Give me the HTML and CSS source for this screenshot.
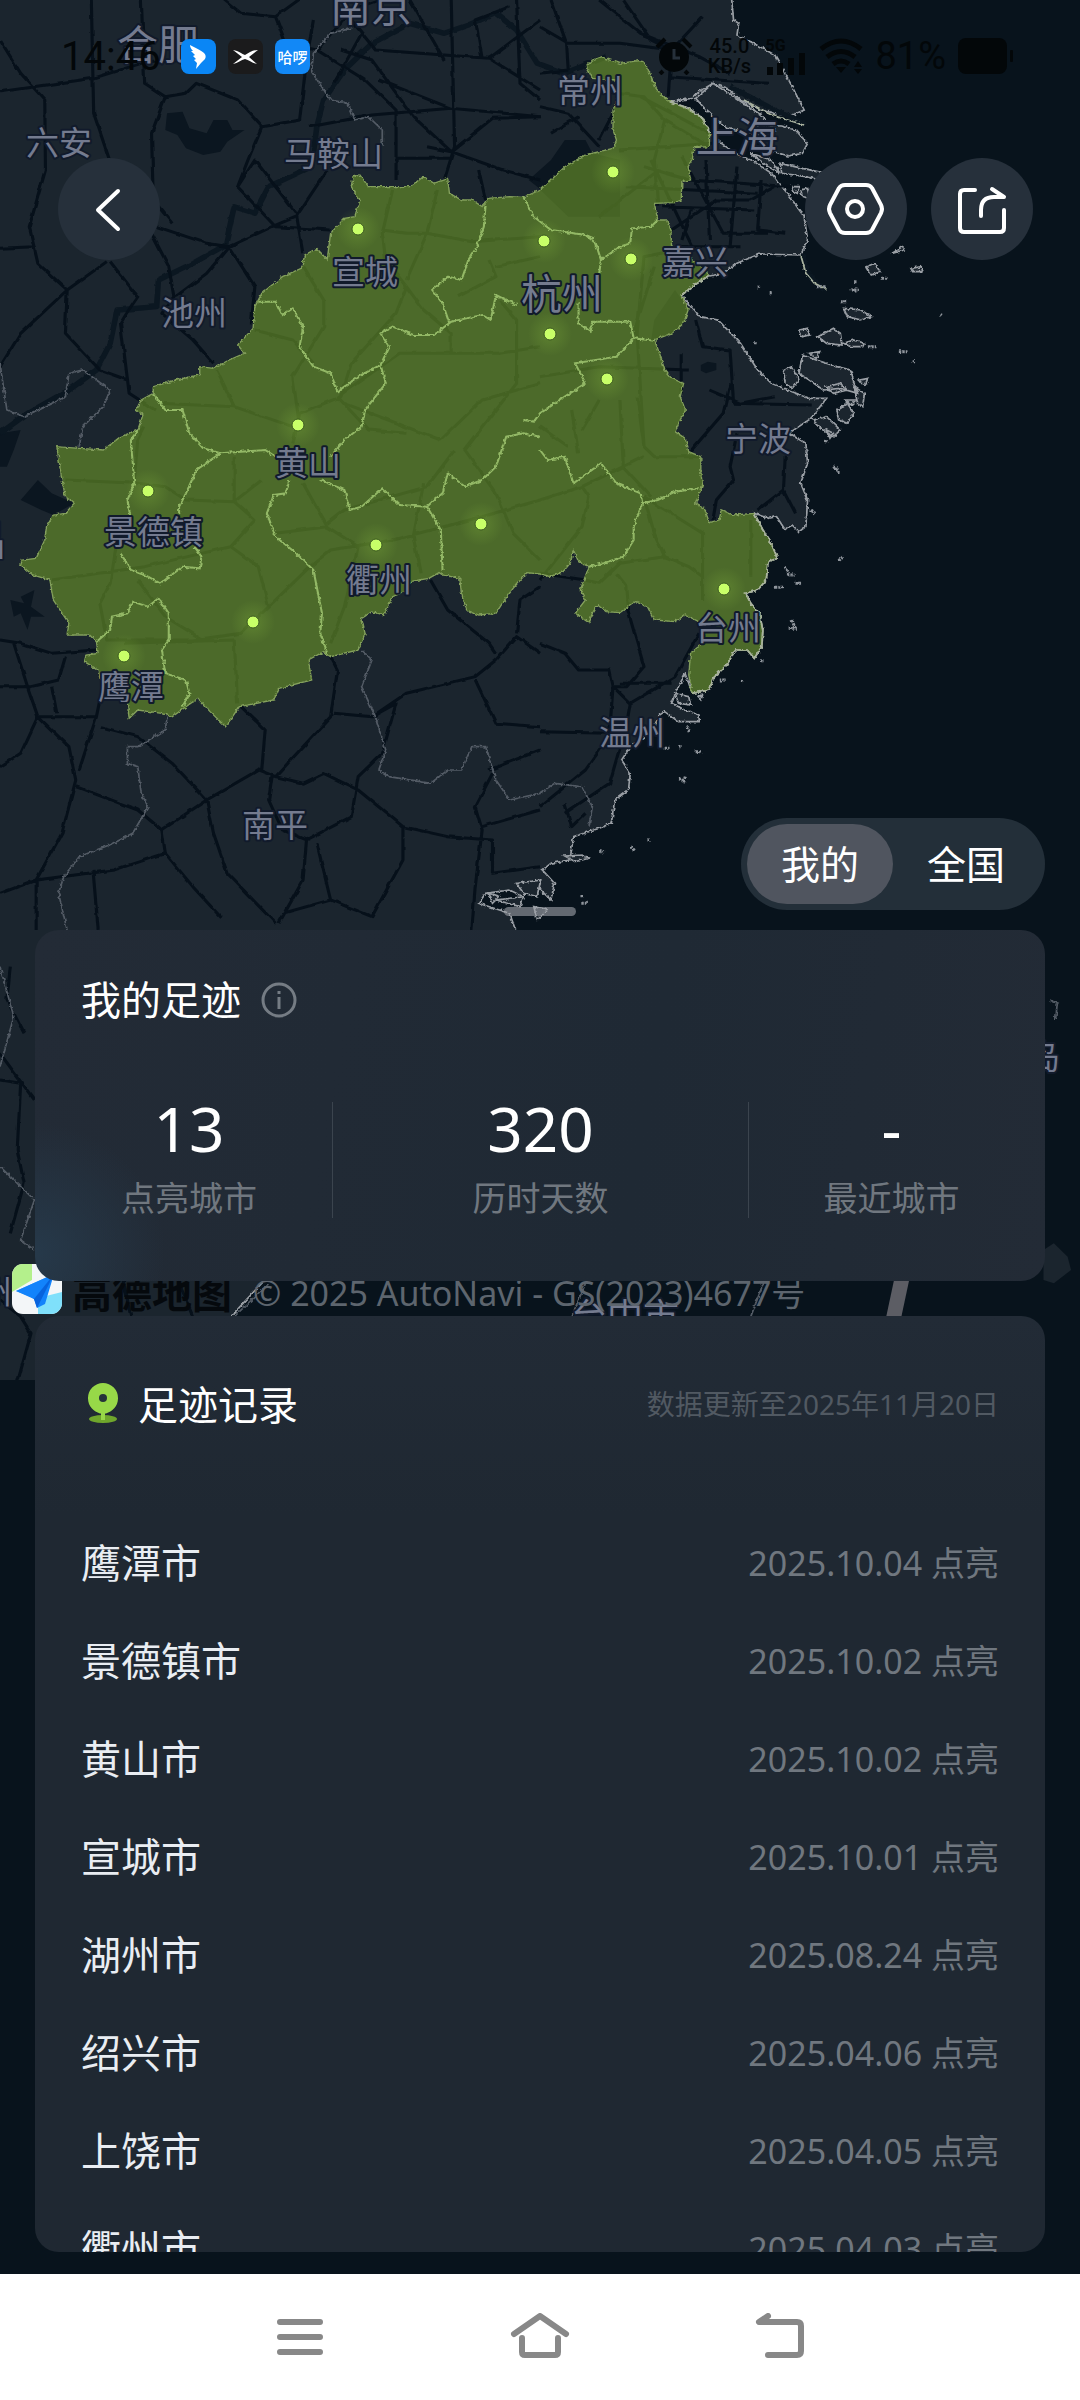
FILE: index.html
```html
<!DOCTYPE html>
<html lang="zh-CN">
<head>
<meta charset="utf-8">
<meta name="viewport" content="width=device-width, initial-scale=1">
<title>我的足迹</title>
<link rel="stylesheet" href="styles.css">
</head>
<body>
<div class="app">
  <svg class="map" viewBox="0 0 1080 1380" preserveAspectRatio="xMidYMin slice" role="img" aria-label="足迹地图">
    <defs>
      <filter id="rough" x="-5%" y="-5%" width="110%" height="110%" color-interpolation-filters="sRGB">
        <feTurbulence type="fractalNoise" baseFrequency="0.09" numOctaves="3" seed="4" result="n"/>
        <feDisplacementMap in="SourceGraphic" in2="n" scale="11" xChannelSelector="R" yChannelSelector="G"/>
      </filter>
      <filter id="bend" x="-5%" y="-5%" width="110%" height="110%" color-interpolation-filters="sRGB">
        <feTurbulence type="fractalNoise" baseFrequency="0.03" numOctaves="2" seed="9" result="n"/>
        <feDisplacementMap in="SourceGraphic" in2="n" scale="10" xChannelSelector="R" yChannelSelector="G"/>
      </filter>
      <radialGradient id="glow"><stop offset="0" stop-color="#a5e04a" stop-opacity=".2"/><stop offset="1" stop-color="#a5e04a" stop-opacity="0"/></radialGradient>
    </defs>
    <rect class="land" width="1080" height="1380"/>
    <g transform="scale(.34439 .33333)">
      <g filter="url(#rough)">
        <path class="sea coast" d="M2123-20 2130 60 2145 70 2140 105 2180 125 2250 165 2290 240 2335 330 2290 350 2210 330 2150 300 2110 265 2070 250 2030 275 2010 295 1945 305 2000 325 2040 355 2060 400 2095 430 2135 460 2190 485 2240 520 2290 585 2335 650 2345 720 2325 765 2205 762 2140 790 2100 820 2050 830 1978 885 2030 950 2085 960 2150 1030 2200 1110 2240 1150 2300 1175 2350 1195 2400 1195 2355 1255 2290 1300 2340 1330 2345 1390 2325 1450 2345 1500 2340 1580 2320 1595 2300 1575 2280 1590 2255 1550 2230 1555 2190 1540 2215 1590 2235 1620 2258 1675 2230 1685 2225 1740 2200 1770 2165 1780 2180 1810 2205 1840 2215 1890 2212 1940 2190 1975 2170 1950 2135 1950 2110 1995 2070 2035 2060 2070 2010 2080 1990 2020 1970 2060 1950 2110 1990 2130 2030 2145 2030 2165 1970 2165 1930 2135 1915 2145 1890 2200 1830 2240 1805 2280 1830 2320 1825 2370 1785 2400 1775 2470 1740 2485 1665 2510 1655 2580 1600 2590 1575 2610 1610 2650 1600 2700 1550 2650 1520 2690 1480 2670 1410 2680 1390 2710 1480 2740 1500 2800 1400 2900 760 3850 670 3950 600 4200 3300 4200 3300-20Z"/>
        <path class="isle" d="M2020 295 2070 250 2130 290 2210 345 2250 390 2190 400 2110 385 2050 330ZM2200 375 2270 378 2310 390 2345 430 2330 460 2290 468 2230 450 2200 420ZM2180 460 2240 480 2265 520 2230 500ZM2265 490 2330 505 2400 520 2400 545 2340 530 2270 520ZM2300 560 2320 560 2315 580 2305 575ZM2325 570 2345 565 2350 595 2330 590Z"/>
        <path class="river" d="M2120 260 2230 320 2340 375M2330 765 2345 820 2370 850 2400 870"/>
        <path class="shore" d="M2325 765 2340 820 2365 850 2400 868M2160 300 2240 345 2335 375"/>
        <path class="isle" d="M2330 1065 2370 1080 2430 1100 2470 1110 2480 1150 2490 1180 2440 1165 2390 1170 2350 1140 2320 1120ZM2375 1010 2420 985 2440 1000 2445 1035 2400 1030ZM2450 925 2500 930 2530 950 2500 960 2460 950ZM2275 1110 2300 1100 2320 1140 2300 1165 2280 1150ZM2360 1260 2400 1250 2440 1290 2420 1310 2390 1290ZM2430 1230 2460 1210 2480 1240 2460 1270 2435 1260ZM2400 1160 2440 1150 2460 1170 2420 1180ZM2320 990 2345 985 2350 1005 2330 1010ZM2450 1030 2480 1020 2510 1030 2505 1040 2470 1040ZM2480 1160 2510 1180 2505 1220 2490 1210ZM2515 800 2540 790 2555 815 2530 825ZM2645 805 2675 800 2680 815 2650 815ZM2590 760 2620 740 2625 750ZM2495 1140 2520 1135 2510 1160ZM2455 1200 2485 1200 2470 1215ZM2400 1290 2420 1300 2410 1315ZM2350 1060 2380 1055 2370 1075ZM1960 2080 2000 2090 2005 2115 1970 2110ZM2025 2090 2040 2085 2035 2100Z"/>
        <path class="isle" d="M1640 2568 1690 2565 1710 2575 1670 2585ZM1420 2680 1450 2690 1430 2710ZM1550 2720 1590 2730 1560 2760ZM1440 2700 1520 2690 1510 2720ZM1500 2650 1570 2640 1560 2690 1520 2680Z"/>
        <path class="islet" d="M2370 860h30M2440 905h20M2480 845h8M2560 835h20M2470 870h24M2200 862h10M2235 878h6M2520 1040h25M2610 1055h25M2650 1085h8M2190 1028h10M2420 1400l20 20M2425 1410l10-8M2280 1700l10 20M2285 1725h22M2250 1762h24M2312 1750h10M2300 1860l8 24M2290 1885h24M2210 1982h8M2150 2040l10 6M2435 1682l14-12M2090 2040h18M1970 2335l20 10M1990 2330l-6 20M1930 2245h14M2020 2255h18M1995 2180l8 16M1970 2240h6M1830 2540l14 12M1880 2520h8M1740 2555h14M1690 2685v8M1688 2710h16M2340 1350l8 6M2355 1530l12 10M2395 1325h10M2730 945h6M2310 1750h16"/>
      </g>
      <path class="lake" d="M485 340 530 335 550 385 600 400 620 360 660 360 675 390 710 390 660 425 640 455 590 465 540 445 515 405 480 390ZM2035 1095 2055 1085 2080 1090 2080 1110 2050 1120 2035 1112ZM0 1300 60 1290 40 1350 20 1400 0 1400ZM60 1500 110 1440 150 1480 215 1510 155 1545 120 1530 60 1500ZM30 1800 70 1810 60 1790 100 1770 90 1820 130 1850 90 1850 80 1890 60 1840 40 1850ZM1535 540 1600 480 1640 420 1700 420 1720 460 1800 480 1800 650 1650 650 1560 560ZM1960 870 2000 930 1985 970 1950 1000 1890 1025 1900 960Z"/>
      <g filter="url(#bend)">
        <path class="river" d="M1440 40 1360 75 1290 100 1190 70 1080 130 1000 210 940 300 920 380 905 500 780 560 740 640 680 620 655 735 560 790 460 840 455 920 340 930 320 1030 280 1110 200 1170 80 1240 0 1300M1440 40 1500 90 1560 190 1640 220 1760 170"/>
        <path class="road" d="M265-10 272 340 318 480M0 275 270 235 410 190 540 180M0 120 60 220 130 300 132 510 85 680 110 790 195 870 190 1000 290 1110 370 1140M0 745 100 740M310 785 195 870 60 1000 0 1100M320 785 400 890 380 920 350 970 375 1180 450 1230M440 700 490 800 505 890 470 940 560 1020 620 1090M455 680 600 730 665 740 790 680 860 650 950 510M410-10 420 250 480 290 540 280 570 250 690 300 760 380 870 360 890 180 910 60M480 290 440 400 445 600 500 670M760 380 720 480 690 560 800 680 960 690M690 560 740 480 860 640 880 760M665 740 740 860 730 970M665 740 600 820 510 890M640-10 700 40 800 50 880-10M800 50 830 130 920 150 1060 240 1150 330 1150 540M920 150 1020 30 1130-10M1020 60 1090 150 1420 175 1568 270M1310-10 1320 440 1290 540M1100 240 1310 325 1568 350M900 380 1080 345 1310 325M1150 475 1310 475M1310 455 1430 355 1568 350M1310 455 1460 510 1568 540M1240 440 1310 455M990 150 1080 180 1200 350 1310 455M1050 100 970 250M1390 510 1410 600M1500 0 1510 250 1568 300M1190 0 1290 180M1400 175 1380 60 1480 20"/>
        <path class="road" d="M1420 175 1568 60M1568 80 1650 130 1800 130 1950 150M1600 0 1645 130 1650 210M1740 0 1860 100 2030 170 2120 220M1650 210 1568 220M1568 320 1650 340 1740 440M1600 400 1680 350M1740 420 1780 340M1860 290 2060 400M1940 230 2230 250M1950 150 1940 290M1810 0 1890 120 1950 150 2040 50M1720 270 1870 290 1930 360 1900 480 1910 620M1930 360 2060 440M1800 450 2070 430M1870 500 2000 540 2300 560M1820 560 2200 580M1890 480 2010 740 1870 770 1850 1000 1870 1340M1980 470 2100 700 2230 700M2050 480 2060 720M2140 500 2120 740M2210 540 2200 690 2280 700M1920 620 2190 630M1950 690 2080 600 2180 600 2250 560M1980 740 2150 740M2010 620 1980 720M1900 800 1840 1000M1900 520 1740 650M2020 960 2040 1040 2120 1050 2130 1210 2360 1215M1978 1060V1180M2120 1150 2100 1240 2000 1360M2140 1300 2120 1400 2130 1440 2080 1500 2070 1560M2280 1370 2275 1470 2200 1530M2060 1170 2150 1210 2250 1190M2275 1470 2310 1540M1568 1130 1740 1100 2000 1110M1660 1230 1680 1360M1800 1200 1810 1400 1890 1490M1850 1190 1870 1340 1900 1370 2030 1370M1740 1200 1690 1290M1568 1280 1650 1340"/>
        <path class="road" d="M1110 690 1180 700 1240 700 1370 725 1568 710M1140 570 1110 700 1120 780 1180 860 1150 940 1020 1090 990 1190 870 1240 850 1330M1270 570 1240 700 1180 840M1180 860 1230 930 1310 1000 1310 1060 1160 1060 980 1190 1070 1290 1180 1300M1310 1060 1450 1060 1568 1040M880 800 940 900 940 980 850 1130 870 1280M740 990 850 1020 910 1090M630 1110 680 1220 460 1210M680 1220 850 1280M1420 780 1440 830 1330 890M1440 800 1568 770M1450 900 1500 960 1500 1150 1350 1350 1440 1480 1490 1600 1568 1680M1000 1210 1280 1320 1400 1200 1568 1150M190 1440 400 1450 480 1460 540 1500 680 1505 760 1440M680 1505 740 1560 670 1640 420 1700 150 1740M680 1505 680 1370M340 1620 320 1750 290 1810 310 1920 560 1920 700 1900 900 1700 960 1650 1140 1620 1400 1550 1568 1500M400 1740 480 1850 590 1920M670 1640 750 1700 780 1820M880 1450 950 1580 800 1600M950 1580 1040 1640 1000 1820 960 1930M950 1570 1000 1530 1240 1460 1320 1350M1230 1450 1200 1610 1220 1720M360 1930 680 1920 690 2110M390 1440 400 1320 420 1280M1568 1500 1690 1460 1710 1490 1690 1580 1568 1740M1690 1460 1870 1370M1870 1490 1900 1600 1930 1670 1800 1690 1740 1750 1700 1740M1870 1490 2040 1600 2040 1800M1930 1670 2000 1700 2040 1730M1790 1720 1820 1760 1825 1830M2180 1560 2180 1730"/>
        <path class="road" d="M0 1920 60 1930 150 1960 280 1950M40 1930 80 2060 110 2150 200 2240 220 2340 180 2500 105 2640 0 2680M0 2060 90 2060 170 2040 190 1970M150 2060 165 2140M110 2150 280 2150 290 2100M110 2150 60 2260 0 2300M280 2150 230 2310M290 2180 400 2210 500 2290 600 2400 750 2310 800 2330 960 2150 980 2010 960 1970M220 2360 400 2430 470 2490 600 2400 620 2500 660 2620 800 2770M470 2490 480 2560 330 2610 105 2640V2790M480 2560 560 2660 640 2750M270 2610 285 2790M700 2120 770 2190 760 2310M790 2330 780 2400 820 2490 890 2520M800 2330 880 2350 940 2320 1040 2370 1170 2480 1300 2510 1430 2520 1430 2620 1568 2600M970 2140 1080 2150 1180 2080 1380 2030 1440 1980 1500 1910 1568 1960M1080 2150 1150 2110 1110 2260 1040 2330 1020 2450 890 2520 880 2640 810 2770M920 2530 960 2700 820 2740M960 2700 1080 2750 1170 2580 1170 2480M1250 1740 1300 1830 1420 1930 1440 1960M1380 2040 1440 2170 1568 2180M1420 2310 1568 2250M1430 2320 1380 2420 1400 2490 1380 2660 1370 2790M1400 2480 1568 2430M1568 1720 1700 1740M1500 1900 1510 1800 1568 1760M1568 1930 1640 1960 1680 2010 1770 2010 1780 2060 1770 2200 1568 2195M1820 1820 1870 2000 1820 2060 1780 2060 1830 2110 1960 2030 2030 1900M1800 2050 1950 2050M1790 2180 1700 2310 1568 2420M1830 2110 1820 2170 1770 2350 1640 2440M1640 2410 1660 2480 1700 2440"/>
        <path class="road" d="M30 2900 20 3000 70 3100M0 3240 60 3250 50 3450 70 3550 30 3700M0 3160 100 3300M0 3900 60 3950 90 4000 50 4150M350 3800 380 3950M520 3850 560 3950"/>
      </g>
      <g filter="url(#rough)">
        <path class="border" d="M1020 85 960 100 910 160 905 215 960 300 1010 310 1030 360 1070 350 1110 390 1110 440M0 1090 20 1230 70 1250 190 1190 200 1120 240 1110 320 1170 300 1220 240 1280 230 1340M485 2150 480 2190 400 2240 370 2240 370 2290 400 2300 410 2380 430 2420 385 2500 330 2530 230 2570 185 2630 170 2680 195 2790M1050 1950 1080 1980 1050 2060 1090 2150 1120 2250 1100 2310 1130 2330 1250 2350 1300 2310 1340 2310 1370 2240 1410 2240 1440 2340 1480 2400 1568 2380 1610 2350 1690 2360 1720 2420 1710 2480M0 3500 100 3600 60 3720 100 3750M0 2900 40 3050 0 3200"/>
        <path class="lit" d="M1703 200 1720 180 1745 170 1800 190 1855 182 1870 185 1885 215 1905 265 1925 290 1950 308 1980 320 2010 335 2040 355 2060 395 2060 440 2015 443 2010 480 1998 500 2005 540 1980 545 1978 600 1960 608 1900 610 1910 660 1935 660 1948 690 1950 740 2010 780 2060 825 2040 840 2010 860 1978 885 1990 910 1998 930 1985 970 1950 1000 1900 1020 1915 1060 1930 1110 1950 1135 1985 1150 1975 1190 1990 1230 1970 1270 1960 1295 1990 1315 2000 1355 2035 1370 2035 1420 2040 1455 2020 1510 2045 1525 2060 1568 2088 1560 2095 1530 2130 1545 2190 1540 2215 1590 2235 1620 2258 1675 2230 1685 2225 1740 2200 1770 2165 1780 2180 1810 2205 1840 2215 1890 2212 1940 2190 1975 2170 1950 2135 1950 2110 1995 2070 2035 2060 2070 2010 2080 2000 2025 2005 1960 2045 1925 2040 1870 1990 1845 1960 1865 1900 1860 1880 1820 1845 1805 1800 1838 1760 1835 1735 1815 1720 1840 1710 1868 1670 1840 1700 1800 1685 1770 1710 1700 1680 1685 1665 1650 1655 1690 1635 1715 1600 1730 1568 1722 1530 1718 1490 1765 1465 1800 1440 1840 1390 1845 1355 1830 1340 1780 1335 1735 1285 1725 1275 1718 1245 1735 1190 1745 1185 1770 1140 1790 1115 1845 1080 1835 1050 1855 1060 1900 1040 1950 960 1970 940 1955 895 1980 905 2040 810 2065 795 2100 695 2120 655 2180 610 2135 575 2095 540 2120 500 2150 470 2140 400 2130 375 2155 370 2110 290 2035 285 2010 245 1985 250 1965 285 1960 280 1925 260 1905 195 1905 200 1870 155 1800 145 1740 95 1725 60 1695 65 1680 105 1675 130 1620 135 1580 155 1545 190 1540 215 1510 190 1490 180 1440 165 1340 230 1345 300 1350 350 1310 400 1290 415 1245 395 1230 410 1200 445 1180 445 1160 510 1140 580 1125 580 1100 620 1105 665 1080 710 1060 690 1035 735 985 740 920 760 880 820 830 875 805 885 765 920 745 950 780 960 700 1000 655 1030 650 1045 600 1020 560 1025 530 1045 525 1070 560 1190 560 1230 530 1260 550 1300 535 1305 580 1340 600 1370 600 1400 620 1420 595 1480 590 1520 592 1568 570 1600 540 1640 500 1700 465 1740 455 1780 445 1790 420 1780 390 1780 330 1795 290 1790 240 1720 235Z"/>
        <path class="litline" d="M750 905 800 905 820 945 850 925 880 980 870 1040 910 1100 960 1120 980 1175 1040 1130 1105 1095 1130 1040 1105 1000 1140 980 1200 1005 1260 1005 1310 965 1400 945 1425 960 1440 885 1500 915M1410 615 1405 680 1385 740 1360 780 1340 840 1300 830 1255 870 1285 910 1305 970M1105 1095 1120 1150 1060 1230 1050 1280 1000 1320 960 1370M445 1180 480 1230 530 1230 550 1300 590 1345 640 1360 700 1355 770 1350 800 1370M640 1360 570 1410 540 1480 520 1520 520 1540M400 1290 380 1320 390 1450 370 1500 380 1560M840 1440 830 1480 795 1485 775 1540 800 1610 860 1660 910 1710 935 1840 930 1900 950 1960M930 1440 1000 1470 1015 1530 1050 1520 1110 1465 1160 1515 1240 1520 1260 1500 1285 1480 1300 1420 1350 1460 1400 1440 1440 1400 1470 1310 1520 1300 1568 1310M1240 1520 1280 1590 1285 1710M1520 1260 1550 1265 1568 1240 1640 1190 1700 1150 1670 1090 1790 1070 1840 1015 1830 965 1720 965 1715 995 1680 970 1680 910M1520 592 1550 650 1600 690 1700 705 1730 730 1745 780 1800 740 1830 730 1835 685 1890 680 1910 660M1700 705 1725 715M1745 780 1740 820M1840 1015 1900 1022M1568 1350 1590 1380 1640 1370 1665 1450 1745 1390 1790 1450 1860 1480 1865 1510 1910 1500 1960 1475 2030 1465M1865 1510 1840 1580 1840 1620 1810 1670 1750 1690 1710 1700M350 1660 380 1710 430 1730 465 1750 530 1700 580 1705 585 1670 565 1640M280 1925 320 1890 325 1850 370 1840 385 1805 430 1820 460 1795 490 1840 490 1920 470 1950 480 2020 540 2040 550 2080 530 2120"/>
        <path class="shore" d="M1945 305 2000 325 2040 355 2060 395M2060 825 2040 840 2010 860 1978 885M2190 1540 2215 1590 2235 1620 2258 1675 2230 1685 2225 1740 2200 1770 2165 1780 2180 1810 2205 1840 2215 1890 2212 1940 2190 1975 2170 1950 2135 1950 2110 1995 2070 2035 2060 2070 2010 2080"/>
        <path class="border" d="M1700 3850 1660 3950M2220 3840 2180 3950M780 3850 680 3950M3048 3000 3070 3010 3065 3060"/>
      </g>
      <path class="lake haze" d="M3030 3750 3060 3730 3100 3770 3110 3810 3060 3850 3030 3840Z"/>
      <path class="ridge" d="M2596 3840H2640L2616 3956H2572Z"/>
    </g>
    <g fill="url(#glow)">
      <circle cx="358" cy="229" r="22"/><circle cx="613" cy="172" r="22"/><circle cx="544" cy="241" r="22"/><circle cx="631" cy="259" r="22"/><circle cx="550" cy="334" r="22"/><circle cx="607" cy="379" r="22"/><circle cx="298" cy="425" r="22"/><circle cx="148" cy="491" r="22"/><circle cx="376" cy="545" r="22"/><circle cx="481" cy="524" r="22"/><circle cx="253" cy="622" r="22"/><circle cx="124" cy="656" r="22"/><circle cx="724" cy="589" r="22"/>
    </g>
    <g class="dot">
      <circle cx="358" cy="229" r="6"/><circle cx="613" cy="172" r="6"/><circle cx="544" cy="241" r="6"/><circle cx="631" cy="259" r="6"/><circle cx="550" cy="334" r="6"/><circle cx="607" cy="379" r="6"/><circle cx="298" cy="425" r="6"/><circle cx="148" cy="491" r="6"/><circle cx="376" cy="545" r="6"/><circle cx="481" cy="524" r="6"/><circle cx="253" cy="622" r="6"/><circle cx="124" cy="656" r="6"/><circle cx="724" cy="589" r="6"/>
    </g>
    <g class="place">
      <text x="26" y="155">六安</text><text x="284" y="166">马鞍山</text><text x="332" y="284">宣城</text><text x="161" y="325">池州</text><text x="275" y="475">黄山</text><text x="104" y="544">景德镇</text><text x="346" y="592">衢州</text><text x="98" y="699">鹰潭</text><text x="242" y="837">南平</text><text x="557" y="103">常州</text><text x="662" y="274">嘉兴</text><text x="725" y="451">宁波</text><text x="695" y="640">台州</text><text x="599" y="745">温州</text><text x="1027" y="1069">岛</text><text x="-21" y="1304">州</text><text x="571" y="1330" class="mid">台中市</text>
    </g>
    <g class="place big">
      <text x="117" y="60">合肥</text><text x="330" y="22">南京</text><text x="696" y="152">上海</text><text x="521" y="309">杭州</text><text x="-34" y="555">昌</text>
    </g>
  </svg>

  <main class="content">
    <div class="hero">
      <div class="status">
        <span class="clock">14:46</span>
        <span class="apps">
          <svg viewBox="0 0 35 35"><rect width="35" height="35" rx="8" fill="#0a86f5"/><path d="M9 6c5 3 11 5 14 8 2 2 2 4 1 6l-4 4-5 6 1-6-3-3 2-1-3-3 2-1-4-4 2 0c-2-2-3-4-3-6z" fill="#fff"/></svg>
          <svg viewBox="0 0 35 35"><rect width="35" height="35" rx="8" fill="#1b1b1c"/><path d="M5 11c6 1 9 4 12 5 4-2 7-5 13-5l-9 7 8 7c-5-1-8-4-12-5-4 1-7 4-12 5l9-7z" fill="#fff"/></svg>
          <span class="hello">哈啰</span>
        </span>
        <span class="sys">
          <svg width="38" height="38" viewBox="0 0 38 38"><circle cx="19" cy="20" r="15"/><path d="M2 10l8-8M36 10l-8-8M8 34l-3 3M30 34l3 3" class="k"/><path d="M19 12v9h6" stroke="#26303a" stroke-width="3" fill="none"/></svg>
          <span class="net">45.0<br>KB/s</span>
          <span class="cell"><span>5G</span><svg width="42" height="22" viewBox="0 0 42 22"><path d="M2 14h6v8H2zM12 10h6v12h-6zM23 5h6v17h-6zM34 0h6v22h-6z"/></svg></span>
          <svg width="46" height="38" viewBox="0 0 46 38"><path d="M3 12q20-16 40 0M9 20q14-11 28 0M15 27q8-6 16 0" class="w"/><path d="M18 30h10l-5 6zM36 30l4-6 4 6zM36 32h8l-4 5z"/></svg>
          <span class="pct">81%</span>
          <svg width="58" height="38" viewBox="0 0 58 38"><rect x="1" y="1" width="49" height="36" rx="8"/><rect x="53" y="13" width="3" height="12" rx="1"/></svg>
        </span>
      </div>
      <div class="toolbar">
        <button class="round" aria-label="返回"><svg viewBox="0 0 102 102"><path d="M60 33 40 52 60 71"/></svg></button>
        <div class="tools">
          <button class="round" aria-label="设置"><svg viewBox="0 0 102 102"><path d="M40 27h21q4 0 6 3l9 17q2 4 0 8l-9 17q-2 3-6 3H40q-4 0-6-3l-9-17q-2-4 0-8l9-17q2-3 6-3z"/><circle cx="50" cy="51" r="8"/></svg></button>
          <button class="round" aria-label="分享"><svg viewBox="0 0 102 102"><path d="M44 32H33q-4 0-4 4v34q0 4 4 4h36q4 0 4-4V52"/><path d="M50 58V52q0-13 13-13h10M61 31l12 8"/></svg></button>
        </div>
      </div>
      <div class="switch">
        <button class="seg on" aria-pressed="true">我的</button>
        <button class="seg" aria-pressed="false">全国</button>
      </div>
      <div class="handle"></div>
    </div>

    <section class="card summary">
      <h1 class="title">我的足迹
        <svg width="36" height="36" viewBox="0 0 36 36" aria-hidden="true"><circle cx="18" cy="18" r="16"/><path d="M18 15v12M18 9v3"/></svg>
      </h1>
      <dl class="stats">
        <div class="stat"><dd>13</dd><dt>点亮城市</dt></div>
        <div class="stat"><dd>320</dd><dt>历时天数</dt></div>
        <div class="stat"><dd>-</dd><dt>最近城市</dt></div>
      </dl>
    </section>

    <div class="credit">
      <svg class="logo" viewBox="0 0 50 50"><defs><clipPath id="lc"><rect width="50" height="50" rx="11"/></clipPath></defs><g clip-path="url(#lc)"><rect width="50" height="50" fill="#f3f6f8"/><path d="M0 0h20v16L0 28z" fill="#b4f08c"/><path d="M26 34 50 28v22H26z" fill="#7fe0fb"/><path d="M42 10 4 27l15 6z" fill="#3ba5ff"/><path d="M42 10 19 33l10 7z" fill="#0a6cf0"/><path d="M42 10 4 27l18 8 3 9 8-4z" fill="#1283fb"/><path d="M22 35 42 10 25 44z" fill="#0763dd"/></g></svg>
      <b class="brand">高德地图</b>
      <span class="rights">© 2025 AutoNavi - GS(2023)4677号</span>
    </div>

    <section class="card records">
      <header class="head">
        <svg width="32" height="40" viewBox="0 0 32 40" aria-hidden="true"><ellipse cx="16" cy="36" rx="14" ry="4" fill="#6fa62c"/><path d="M14 28h4v9h-4z" fill="#97d848"/><path d="M16 0a15 15 0 0 1 15 15.500c0 8-6 13-12 15h-6C7 28.500 1 23.500 1 15.500A15 15 0 0 1 16 0z" fill="#97d848"/><circle cx="16" cy="15" r="4" fill="#24323a"/></svg>
        <h2>足迹记录</h2>
        <small>数据更新至2025年11月20日</small>
      </header>
      <ul class="list">
        <li><span>鹰潭市</span><time>2025.10.04 点亮</time></li>
        <li><span>景德镇市</span><time>2025.10.02 点亮</time></li>
        <li><span>黄山市</span><time>2025.10.02 点亮</time></li>
        <li><span>宣城市</span><time>2025.10.01 点亮</time></li>
        <li><span>湖州市</span><time>2025.08.24 点亮</time></li>
        <li><span>绍兴市</span><time>2025.04.06 点亮</time></li>
        <li><span>上饶市</span><time>2025.04.05 点亮</time></li>
        <li><span>衢州市</span><time>2025.04.03 点亮</time></li>
      </ul>
    </section>
  </main>

  <nav class="navbar">
    <button aria-label="最近任务"><svg viewBox="0 0 60 48"><path d="M10 9h40M10 24h40M10 39h40"/></svg></button>
    <button aria-label="主页"><svg viewBox="0 0 60 48"><path d="M4 21 30 3l26 18M12 25v14q0 3 3 3h30q3 0 3-3V25"/></svg></button>
    <button aria-label="返回"><svg viewBox="0 0 60 48"><path d="M18 3 9 9h38q4 0 4 4v25q0 4-4 4H18"/></svg></button>
  </nav>
</div>
</body>
</html>
```

FILE: styles.css
```css
* { box-sizing: border-box; margin: 0; padding: 0; }
body {
  font-family: "Noto Sans", "Noto Sans CJK SC", sans-serif;
  background: #08131c;
  color: #fff;
}
button { border: 0; background: none; color: inherit; font: inherit; cursor: pointer; }
.app { position: relative; height: 100vh; display: flex; flex-direction: column; overflow: hidden; }

/* Map */
.map { position: absolute; top: 0; left: 0; width: 100%; height: 1380px; }
.land { fill: #1b252e; }
.sea { fill: #08131c; }
.coast { stroke: #9a9fa5; stroke-width: 5; }
.shore { fill: none; stroke: #a9b29f; stroke-width: 5; }
.isle { fill: #1b252e; stroke: #9a9fa5; stroke-width: 5; }
.islet { fill: none; stroke: #8f959c; stroke-width: 9; stroke-dasharray: 7 3; }
.lake { fill: #0b1620; }
.haze { fill: #1b252e; }
.river { fill: none; stroke: #0b1721; stroke-width: 16; stroke-linejoin: round; }
.road { fill: none; stroke: #06101a; stroke-width: 9; stroke-linejoin: round; }
.border { fill: none; stroke: #535b65; stroke-width: 5; }
.lit { fill: #6a9428; fill-opacity: .62; stroke: #84a05c; stroke-width: 4; }
.litline { fill: none; stroke: #93b866; stroke-width: 6; }
.ridge { fill: #5c5d64; }
.dot { fill: #c8ff68; stroke: #3c5a20; stroke-width: 1; }
.place {
  font-family: "Noto Sans CJK SC", sans-serif;
  font-size: 33px;
  fill: #747b8f;
  stroke: #111a2b;
  stroke-width: 4px;
  stroke-linejoin: round;
  paint-order: stroke;
}
.place .mid { font-size: 36px; }
.big { font-size: 41px; }

.content {
  position: relative;
  flex: 1;
  min-height: 0;
  display: flex;
  flex-direction: column;
  padding: 0 35px 22px;
}
.hero { flex: none; height: 930px; display: flex; flex-direction: column; }

/* Status bar */
.status {
  height: 112px;
  display: flex;
  align-items: center;
  padding: 0 30px 0 26px;
  color: #030709;
  fill: #030709;
  font-family: Roboto, sans-serif;
}
.clock { font-size: 40px; width: 120px; }
.apps { display: flex; gap: 12px; }
.apps svg { width: 35px; height: 35px; }
.hello {
  width: 35px;
  height: 35px;
  border-radius: 8px;
  background: #1288f6;
  color: #fff;
  font: 500 15px/35px "Noto Sans CJK SC", sans-serif;
  text-align: center;
}
.sys { margin-left: auto; display: flex; align-items: center; gap: 11px; }
.sys .k { stroke: #030709; stroke-width: 4; }
.sys .w { stroke: #030709; stroke-width: 5; fill: none; }
.net { font-size: 20px; font-weight: 500; line-height: 20px; width: 50px; text-align: center; }
.cell { display: flex; flex-direction: column; font-size: 16px; line-height: 15px; font-weight: 700; }
.pct { font-size: 38px; }

/* Map controls */
.toolbar { margin-top: 46px; padding: 0 12px 0 23px; display: flex; justify-content: space-between; }
.tools { display: flex; gap: 24px; }
.round { width: 102px; height: 102px; border-radius: 50%; background: #26303b; }
.round svg { display: block; width: 102px; height: 102px; fill: none; stroke: #fff; stroke-width: 4; stroke-linecap: round; stroke-linejoin: round; }
.switch {
  margin-top: auto;
  align-self: flex-end;
  height: 92px;
  padding: 6px;
  display: flex;
  border-radius: 46px;
  background: #232f39;
}
.seg { width: 146px; border-radius: 40px; font-size: 39px; line-height: 78px; }
.seg.on { background: #50555f; }
.handle {
  flex: none;
  width: 72px;
  height: 9px;
  margin: -3px auto 14px;
  border-radius: 5px;
  background: rgba(160, 164, 170, .6);
}

/* Cards */
.card { position: relative; border-radius: 24px; background: #1f2832; }
.summary {
  z-index: 1;
  flex: none;
  height: 351px;
  background: radial-gradient(circle at 0 92%, #26394a, rgba(38, 57, 74, 0) 130px), linear-gradient(100deg, #232b36, #1f2934 60%, #232b36);
}
.title { display: flex; align-items: center; gap: 20px; padding: 40px 46px 0; font-size: 40px; font-weight: 400; line-height: 60px; }
.title svg { fill: none; stroke: #757c84; stroke-width: 3; }
.stats { display: grid; grid-template-columns: 286fr 416fr 286fr; padding: 0 11px; margin-top: 72px; }
.stat { height: 116px; display: flex; flex-direction: column-reverse; justify-content: flex-end; align-items: center; text-align: center; }
.stat + .stat { border-left: 1px solid #3b444e; }
.stat { flex-direction: column; justify-content: flex-start; }
.stat dd { font-size: 62px; line-height: 52px; }
.stat dt { margin-top: 22px; color: #70777f; font-size: 34px; line-height: 44px; }

.credit { flex: none; height: 35px; display: flex; align-items: center; margin-left: -23px; white-space: nowrap; }
.logo { width: 50px; height: 50px; margin-top: -20px; }
.brand { margin: -12px 0 0 10px; font-size: 40px; line-height: 35px; color: #05090d; }
.rights { margin: -10px 0 0 21px; font-size: 34px; line-height: 35px; color: #5d656e; }

.records {
  flex: 1;
  min-height: 0;
  overflow: hidden;
  padding: 57px 46px 0;
  background: linear-gradient(#222b36, #1f2832 200px);
}
.head { display: flex; align-items: center; height: 60px; padding-left: 6px; }
.head h2 { margin-left: 19px; font-size: 40px; font-weight: 400; }
.head small { margin-left: auto; font-size: 28px; color: #515962; }
.list { list-style: none; margin-top: 79px; }
.list li { height: 98px; display: flex; align-items: center; justify-content: space-between; font-size: 40px; color: #e9edf2; }
.list time { font-size: 34px; color: #70777f; }

/* System navigation */
.navbar { position: relative; flex: none; height: 126px; background: #fff; display: flex; justify-content: center; }
.navbar button { flex: 0 0 22.2%; display: flex; justify-content: center; padding-top: 39px; }
.navbar svg { width: 60px; height: 48px; fill: none; stroke: #888; stroke-width: 6; stroke-linecap: round; stroke-linejoin: round; }
```
